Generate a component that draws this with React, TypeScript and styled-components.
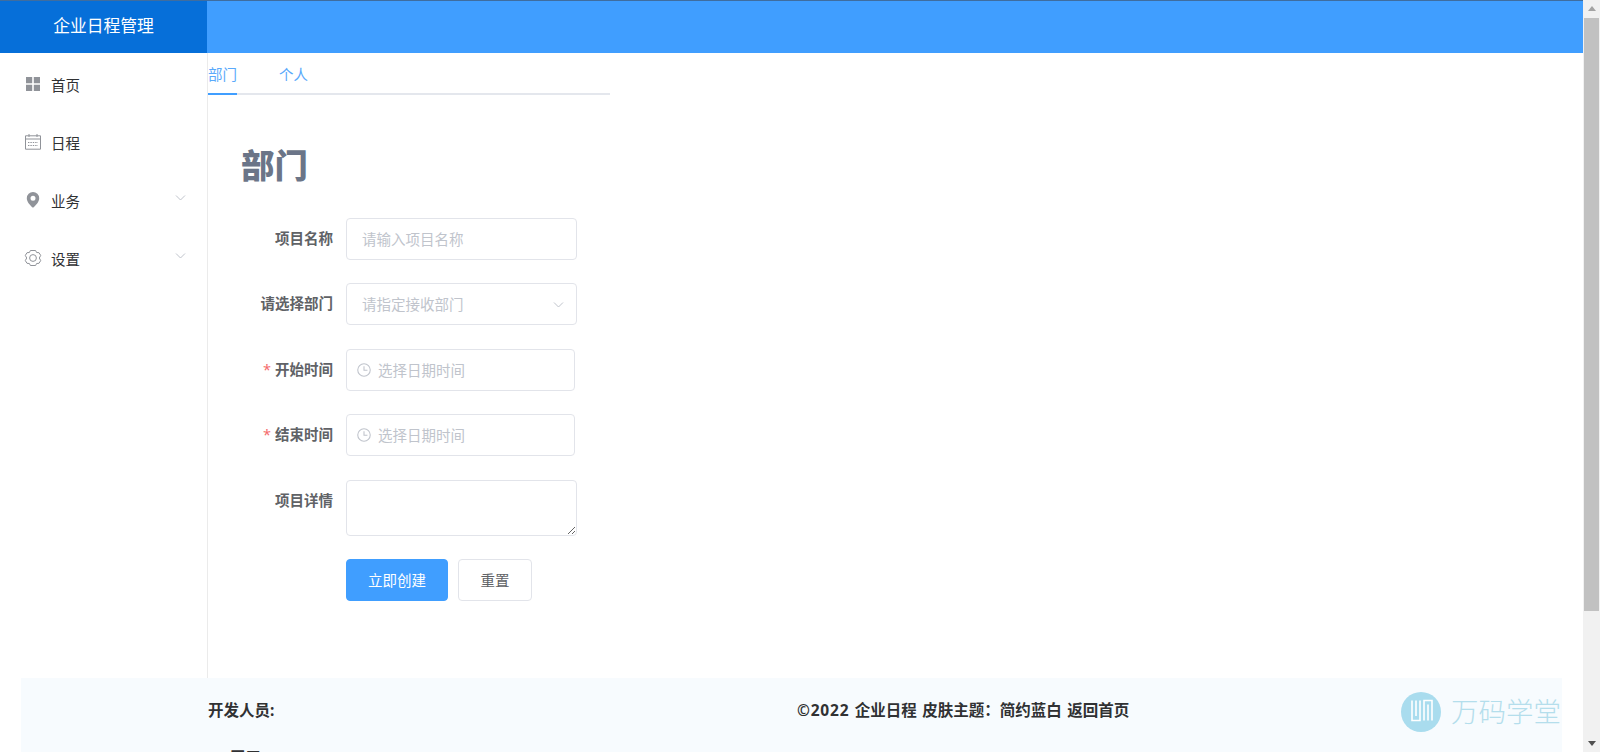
import React from "react";
import styled, { createGlobalStyle } from "styled-components";

const FONT = `"Noto Sans", "Noto Sans CJK SC", "Liberation Sans", sans-serif`;

const Global = createGlobalStyle`
  html, body { height: 100%; overflow: hidden; }
  body { margin: 0; background: #fff; font-family: ${FONT}; font-size: 14.5px; }
  * { box-sizing: border-box; }
`;

const Shell = styled.div`display: flex; height: 100vh; overflow: hidden;`;
const Viewport = styled.div`flex: 1; min-width: 0; height: 100%; overflow: hidden;`;
const Rail = styled.div`width: 17px; flex: none; background: #f1f1f1; display: flex; flex-direction: column; align-items: center;`;
const RailButton = styled.div<{ $down?: boolean }>`
  height: 17px; width: 100%; flex: none; display: flex; align-items: center; justify-content: center;
  &::before {
    content: ""; width: 0; height: 0; border-left: 4.5px solid transparent; border-right: 4.5px solid transparent;
    ${(p) => (p.$down ? "border-top: 5px solid #505050;" : "border-bottom: 5px solid #a3a3a3;")}
  }
`;
const RailThumb = styled.div`width: 15px; height: 593px; flex: none; background: #c1c1c1; margin-top: 1px;`;
const RailSpace = styled.div`flex: 1;`;

const Page = styled.div`display: flex; flex-direction: column; height: 912px;`;
const Header = styled.header`display: flex; height: 53px; background: #409eff; border-top: 1px solid #3f6d9f; flex: none;`;
const Brand = styled.div`width: 207px; background: #066fd9; color: #fff; font-size: 16.8px; line-height: 50px; text-align: center;`;
const Body = styled.div`display: flex; height: 625px; flex: none;`;
const Sidebar = styled.nav`width: 208px; flex: none; border-right: 1px solid #ebebeb; padding-top: 2px;`;
const MenuItem = styled.div`height: 58px; display: flex; align-items: center; padding-left: 24px; color: #303133; position: relative;`;
const MenuIcon = styled.svg`width: 18px; height: 18px; margin-right: 9px; flex: none; color: #909399;`;
const MenuChevron = styled.svg`position: absolute; left: 175px; top: 23px; width: 11px; height: 8px; color: #c0c4cc;`;
const Main = styled.main`flex: 1; min-width: 0;`;
const Tabs = styled.div`width: 402px; height: 42px; border-bottom: 2px solid #e4e7ed; display: flex; gap: 42px; position: relative;`;
const Tab = styled.div<{ $active?: boolean }>`
  height: 42px; line-height: 43px; color: #5aa9fb; position: relative;
  ${(p) => p.$active && `&::after { content: ""; position: absolute; left: 0; right: 0; bottom: 0; height: 2px; background: #409eff; }`}
`;
const FormArea = styled.section`padding: 47px 0 0 33px;`;
const Title = styled.h2`margin: 0 0 32px; font-size: 33.4px; line-height: 44px; color: #6b7588; font-weight: 900; font-family: "Noto Sans CJK SC", sans-serif;`;
const Row = styled.div`display: flex; margin-bottom: 23.4px;`;
const Label = styled.label`width: 105px; padding-right: 13px; text-align: right; font-weight: 700; color: #606266; line-height: 41px; flex: none; white-space: nowrap;`;
const Star = styled.span`color: #f56c6c; font-weight: 400; margin-right: 4px;`;
const Field = styled.div<{ $w?: number }>`position: relative; width: ${(p) => p.$w ?? 231}px; height: 42px;`;
const TextInput = styled.input<{ $left?: number }>`
  width: 100%; height: 100%; border: 1px solid #e2e4ea; border-radius: 4px; outline: none;
  padding: 0 16px 0 ${(p) => p.$left ?? 15}px; font: inherit; background: #fff; color: #606266;
  &::placeholder { color: #c0c4cc; opacity: 1; }
`;
const FieldIcon = styled.svg`position: absolute; left: 11px; top: 14px; width: 14px; height: 14px; color: #c0c4cc;`;
const SelectArrow = styled.svg`position: absolute; right: 13px; top: 18px; width: 11px; height: 8px; color: #c0c4cc;`;
const TextArea = styled.textarea`display: block; width: 231px; height: 56px; border: 1px solid #e2e4ea; border-radius: 4px; outline: none; font: inherit;`;
const Actions = styled.div`display: flex; gap: 10px; padding-left: 105px;`;
const Button = styled.button<{ $primary?: boolean }>`
  height: 42px; width: ${(p) => (p.$primary ? 102 : 74)}px; border-radius: 4px; font: inherit; padding: 0;
  border: 1px solid ${(p) => (p.$primary ? "#409eff" : "#e2e4ea")};
  background: ${(p) => (p.$primary ? "#409eff" : "#fff")};
  color: ${(p) => (p.$primary ? "#fff" : "#606266")};
`;
const Footer = styled.footer`margin: 0 21px; flex: 1; background: #f7fbfe; display: grid; grid-template-columns: 187px 589px 604px 1fr; align-items: start; color: #303133; font-weight: 700; font-size: 15.5px; overflow: hidden;`;
const FootCol = styled.div`padding-top: 19px; line-height: 26px; white-space: nowrap; word-spacing: 1.4px;`;
const Year = styled.span`letter-spacing: 0.8px;`;
const People = styled.div`margin-top: 21px; padding-left: 22px;`;
const Logo = styled.div`display: flex; align-items: flex-start; gap: 10px; padding-top: 14px;`;
const LogoText = styled.span`font-size: 27.5px; font-weight: 300; color: #b4deec; white-space: nowrap; line-height: 36px; font-family: "Noto Sans CJK SC", sans-serif;`;

const Chev = () => <path d="M1 1.5 L5.5 6 L10 1.5" fill="none" stroke="currentColor" strokeWidth="1" />;

const App = () => (
  <Shell>
    <Global />
    <Viewport>
      <Page>
        <Header><Brand>企业日程管理</Brand></Header>
        <Body>
          <Sidebar>
            <MenuItem>
              <MenuIcon viewBox="0 0 18 18"><path fill="currentColor" d="M2 2h6.2v6.2H2zM9.8 2H16v6.2H9.8zM2 9.8h6.2V16H2zM9.8 9.8H16V16H9.8z" /></MenuIcon>
              首页
            </MenuItem>
            <MenuItem>
              <MenuIcon viewBox="0 0 18 18" fill="none" stroke="currentColor"><path d="M1.5 2.8h15v13.4h-15zM1.5 6h15M5 1v3M13 1v3" /><path strokeDasharray="1.4 1" d="M4 9.5h10M4 12.5h10" /></MenuIcon>
              日程
            </MenuItem>
            <MenuItem>
              <MenuIcon viewBox="0 0 18 18"><path fill="currentColor" fillRule="evenodd" d="M9 1a6.2 6.2 0 0 1 6.2 6.2c0 3.8-3.8 7.4-6.2 9.6-2.4-2.2-6.2-5.8-6.2-9.6A6.2 6.2 0 0 1 9 1zm0 3.8a2.5 2.5 0 1 0 0 5 2.5 2.5 0 0 0 0-5z" /></MenuIcon>
              业务
              <MenuChevron viewBox="0 0 11 8"><Chev /></MenuChevron>
            </MenuItem>
            <MenuItem>
              <MenuIcon viewBox="0 0 18 18" fill="none" stroke="currentColor"><path d="M6.4 1.5h5.2l1 2 2.4.2 1.7 2.7L15.3 9l1.4 2.6-1.7 2.7-2.4.2-1 2H6.4l-1-2-2.4-.2-1.7-2.7L2.7 9 1.3 6.4 3 3.7l2.4-.2z" /><circle cx="9" cy="9" r="3.4" /></MenuIcon>
              设置
              <MenuChevron viewBox="0 0 11 8"><Chev /></MenuChevron>
            </MenuItem>
          </Sidebar>
          <Main>
            <Tabs>
              <Tab $active>部门</Tab>
              <Tab>个人</Tab>
            </Tabs>
            <FormArea>
              <Title>部门</Title>
              <Row><Label>项目名称</Label><Field><TextInput placeholder="请输入项目名称" /></Field></Row>
              <Row>
                <Label>请选择部门</Label>
                <Field>
                  <TextInput placeholder="请指定接收部门" readOnly />
                  <SelectArrow viewBox="0 0 11 8"><Chev /></SelectArrow>
                </Field>
              </Row>
              {["开始时间", "结束时间"].map((t) => (
                <Row key={t}>
                  <Label><Star>*</Star>{t}</Label>
                  <Field $w={229}>
                    <TextInput $left={31} placeholder="选择日期时间" />
                    <FieldIcon viewBox="0 0 13 13" fill="none" stroke="currentColor"><circle cx="6.5" cy="6.5" r="5.8" /><path d="M6.5 3v3.8h3.2" /></FieldIcon>
                  </Field>
                </Row>
              ))}
              <Row><Label>项目详情</Label><TextArea /></Row>
              <Actions>
                <Button $primary>立即创建</Button>
                <Button>重置</Button>
              </Actions>
            </FormArea>
          </Main>
        </Body>
        <Footer>
          <div />
          <FootCol>
            开发人员:
            <People>王五</People>
          </FootCol>
          <FootCol><Year>©2022</Year> 企业日程 皮肤主题：简约蓝白 返回首页</FootCol>
          <Logo>
            <svg width="40" height="40" viewBox="0 0 40 40" style={{ flex: "none" }}>
              <circle cx="20" cy="20" r="20" fill="#a9dcee" />
              <path d="M11 8.5v20h8v-20M15 8.5v15.5M23 28.5v-20h8v20M27 12.5v16" fill="none" stroke="#fff" strokeWidth="1.6" />
            </svg>
            <LogoText>万码学堂</LogoText>
          </Logo>
        </Footer>
      </Page>
    </Viewport>
    <Rail>
      <RailButton />
      <RailThumb />
      <RailSpace />
      <RailButton $down />
    </Rail>
  </Shell>
);

export default App;
